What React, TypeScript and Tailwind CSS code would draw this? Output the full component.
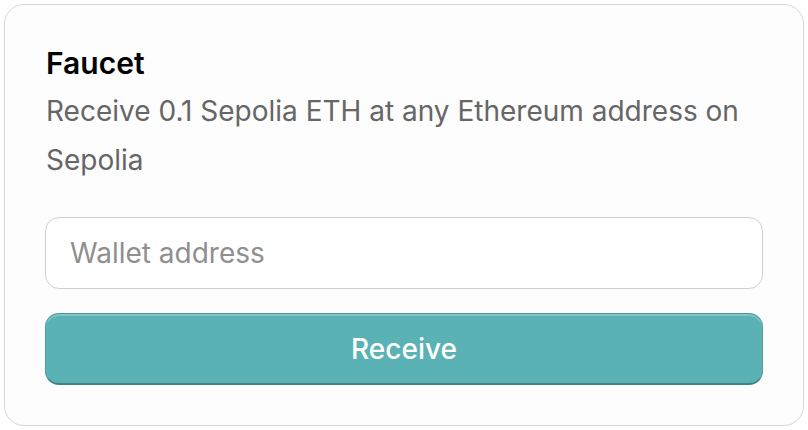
import React from 'react';

const App = () => {
  return (
    <div
      className="min-h-screen w-full bg-white p-1"
      style={{ fontFamily: 'Inter, "Noto Sans", sans-serif' }}
    >
      <div className="h-[422px] w-[800px] rounded-[20px] border border-[#d6d6d6] bg-[#fdfdfd] px-[40px] pt-[37px]">
        <h2 className="pl-px text-[30px] font-semibold leading-[42px] text-black">Faucet</h2>
        <p className="mt-[3px] pl-px text-[28px] leading-[49px] text-[#666666]">
          Receive 0.1 Sepolia ETH at any Ethereum address on Sepolia
        </p>
        <input
          type="text"
          placeholder="Wallet address"
          className="mt-[32px] block h-[72px] w-full rounded-[14px] border border-[#d0d0d0] bg-white px-6 text-[28px] text-[#333] outline-none placeholder:text-[#8f8f8f]"
        />
        <button
          type="button"
          className="mt-[24px] flex h-[72px] w-full items-center justify-center rounded-[14px] border border-[#4a9c9e] border-b-[2px] border-b-[#3d8688] bg-[#5ab2b4] text-[28px] font-medium text-white shadow-[inset_0_2px_0_rgba(255,255,255,0.25)]"
        >
          Receive
        </button>
      </div>
    </div>
  );
};

export default App;
